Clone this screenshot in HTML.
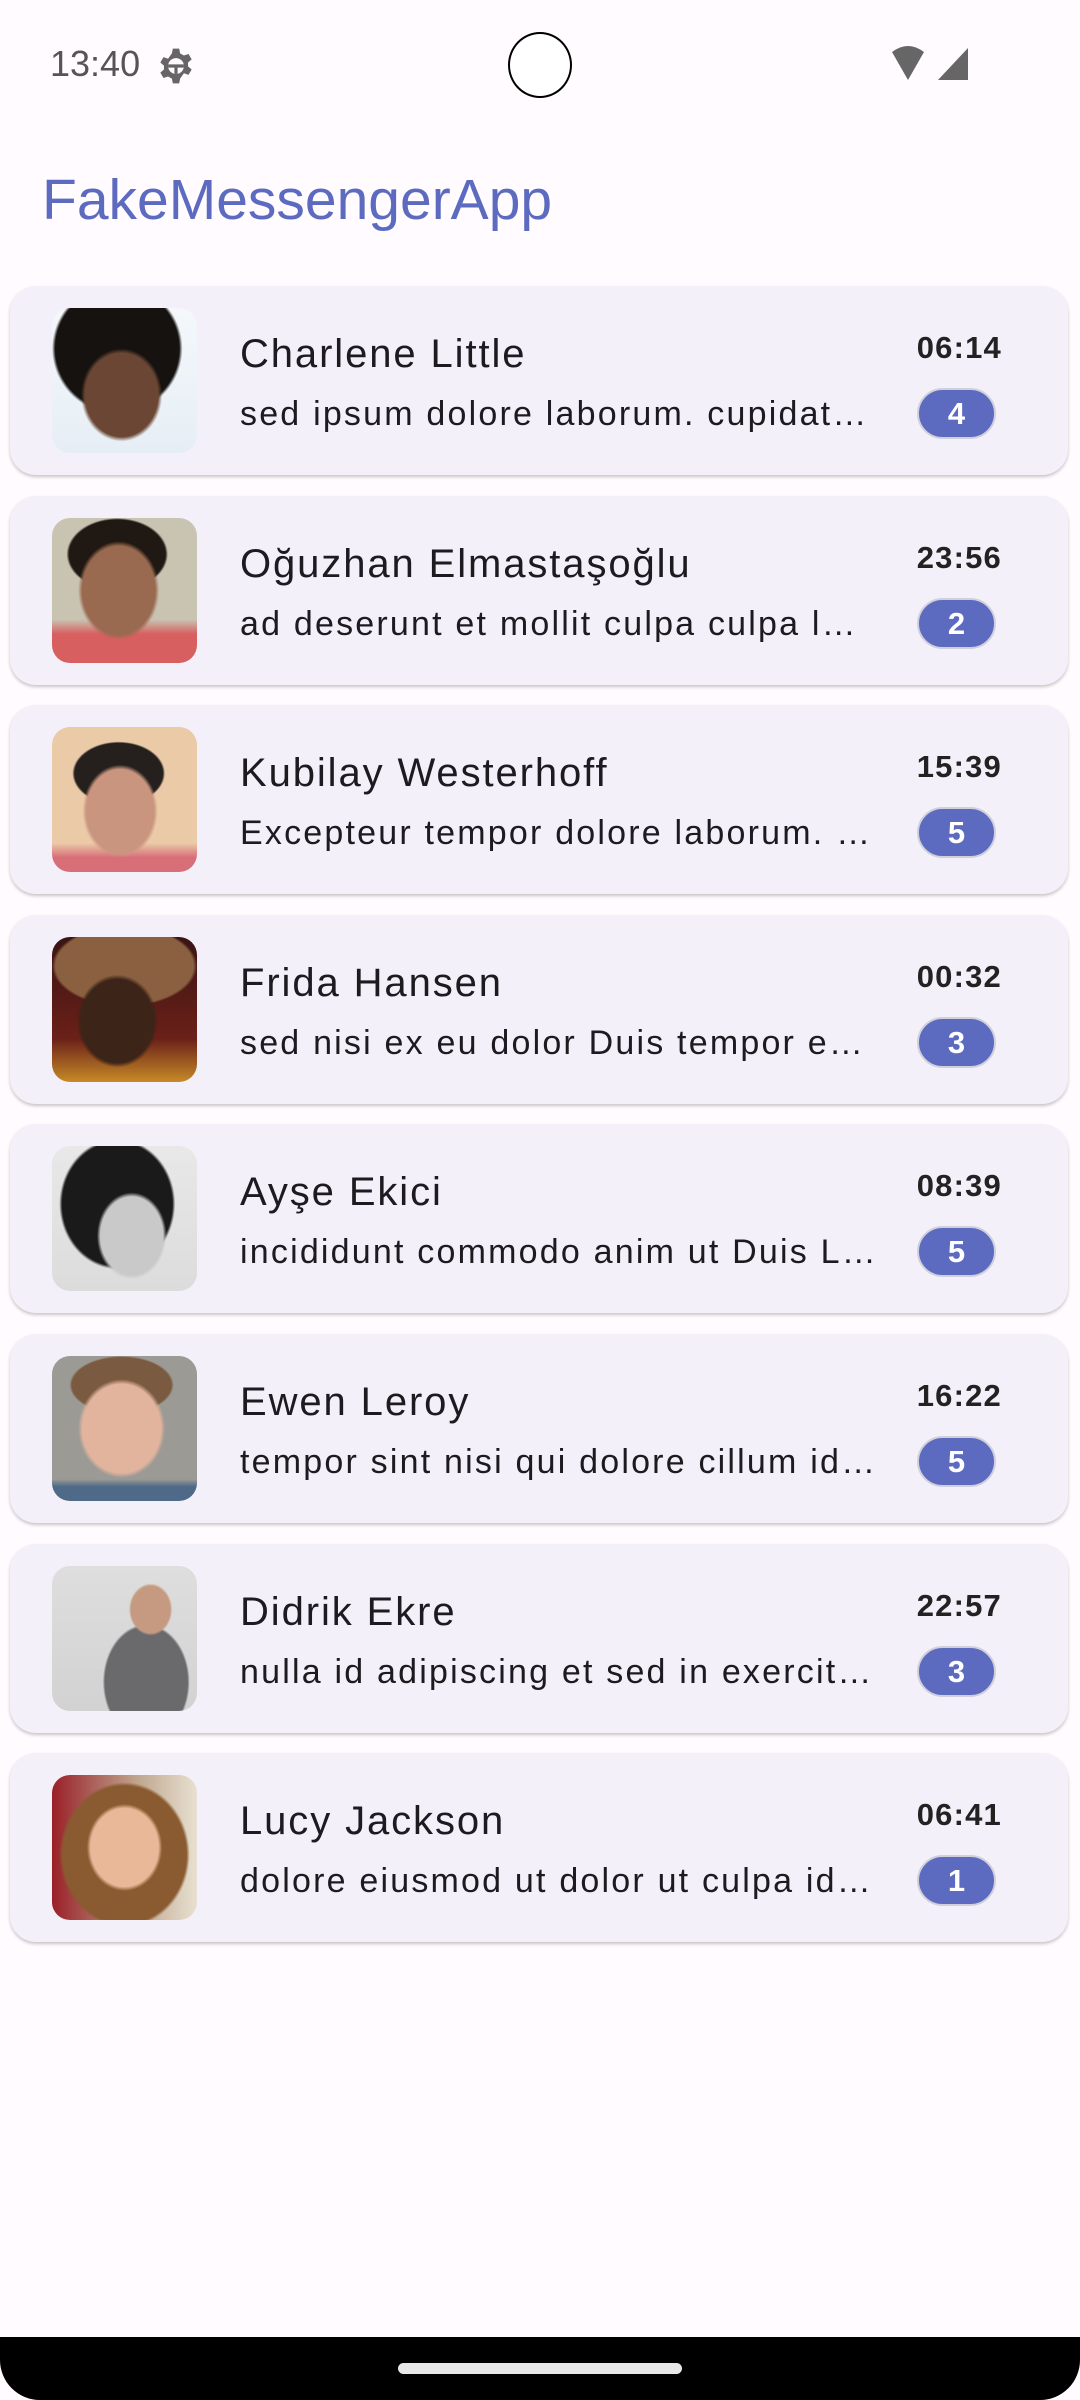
<!DOCTYPE html>
<html><head><meta charset="utf-8"><style>
*{margin:0;padding:0;box-sizing:border-box}
body{width:1080px;height:2400px;background:#fffbfe;position:relative;overflow:hidden;font-family:"Liberation Sans","Noto Sans CJK SC",sans-serif;color:#1c1b1f}
.abs{position:absolute}
.card{position:absolute;left:10px;width:1058px;height:189px;background:#f4f0f9;border-radius:26px;box-shadow:0 2px 3px rgba(0,0,0,.22)}
.av{position:absolute;left:42px;top:22px;width:145px;height:145px;border-radius:18px;overflow:hidden}
.name{position:absolute;left:230px;top:48px;font-size:40px;line-height:40px;letter-spacing:1.9px;white-space:nowrap}
.msg{position:absolute;left:230px;top:110px;width:636px;font-size:34px;line-height:36px;letter-spacing:2.2px;white-space:nowrap;overflow:hidden;text-overflow:ellipsis}
.time{position:absolute;right:66px;top:46px;font-size:31px;line-height:32px;font-weight:bold;letter-spacing:1.2px;color:#222}
.badge{position:absolute;left:907px;top:102px;width:79px;height:51px;border-radius:26px;background:#5c6bc0;border:2px solid #d0d0dc;color:#fff;font-size:31px;line-height:47px;text-align:center;font-weight:bold}
</style></head><body>
<div class="abs" style="left:50px;top:46px;font-size:36px;color:#555;line-height:36px">13:40</div>
<svg class="abs" style="left:157px;top:47px" width="38" height="38" viewBox="0 0 24 24"><path fill="#666" d="M10 1h4l.6 3 2.4 1.4 2.9-1 2 3.4-2.3 2v2.4l2.3 2-2 3.4-2.9-1L14.6 20 14 23h-4l-.6-3L7 18.6l-2.9 1-2-3.4 2.3-2v-2.4l-2.3-2 2-3.4 2.9 1L9.4 4z"/><circle cx="12" cy="12" r="5" fill="#fffbfe"/><path d="M7 12h10M12 12v5" stroke="#666" stroke-width="2"/></svg>
<div class="abs" style="left:508px;top:32px;width:64px;height:66px;border-radius:50%;border:2px solid #000;background:#fff"></div>
<svg class="abs" style="left:890px;top:46px" width="80" height="36" viewBox="0 0 80 36"><path d="M2 6 Q18 -6 34 6 L18 34 Z" fill="#666"/><path d="M78 2 V34 H48 Z" fill="#666"/></svg>
<div class="abs" style="left:42px;top:170px;font-size:57px;line-height:60px;color:#5c6bc0">FakeMessengerApp</div>

<div class="card" style="top:286px"><div class="av" style="background:radial-gradient(ellipse 28% 32% at 48% 60%,#6b4634 0 90%,transparent 100%),radial-gradient(ellipse 45% 45% at 45% 28%,#161210 0 95%,transparent 100%),linear-gradient(#f4f8fb,#e6eef5)"></div><div class="name">Charlene Little</div><div class="msg">sed ipsum dolore laborum. cupidatat non proident</div><div class="time">06:14</div><div class="badge">4</div></div>
<div class="card" style="top:496px"><div class="av" style="background:radial-gradient(ellipse 28% 34% at 46% 50%,#9a6a50 0 90%,transparent 100%),radial-gradient(ellipse 35% 25% at 45% 25%,#201812 0 95%,transparent 100%),linear-gradient(to bottom,#c9c3b1 70%,#d75f60 80%)"></div><div class="name">Oğuzhan Elmastaşoğlu</div><div class="msg">ad deserunt et mollit culpa culpa labore et dolor</div><div class="time">23:56</div><div class="badge">2</div></div>
<div class="card" style="top:705px"><div class="av" style="background:radial-gradient(ellipse 26% 32% at 47% 58%,#c9957e 0 90%,transparent 100%),radial-gradient(ellipse 32% 22% at 46% 32%,#25201e 0 95%,transparent 100%),linear-gradient(to bottom,#ebcaa8 80%,#d86e78 90%)"></div><div class="name">Kubilay Westerhoff</div><div class="msg">Excepteur tempor dolore laborum. in culpa sunt</div><div class="time">15:39</div><div class="badge">5</div></div>
<div class="card" style="top:915px"><div class="av" style="background:radial-gradient(ellipse 28% 32% at 45% 58%,#3c2418 0 90%,transparent 100%),radial-gradient(ellipse 50% 28% at 50% 20%,#8a6040 0 95%,transparent 100%),linear-gradient(to bottom,#3a1414,#6a2018 70%,#c78a28)"></div><div class="name">Frida Hansen</div><div class="msg">sed nisi ex eu dolor Duis tempor esse et ipsum</div><div class="time">00:32</div><div class="badge">3</div></div>
<div class="card" style="top:1124px"><div class="av" style="background:radial-gradient(ellipse 24% 30% at 55% 62%,#c9c9c9 0 90%,transparent 100%),radial-gradient(ellipse 40% 45% at 45% 40%,#1a1a1a 0 95%,transparent 100%),linear-gradient(#e8e8e8,#dcdcdc)"></div><div class="name">Ayşe Ekici</div><div class="msg">incididunt commodo anim ut Duis Lorem ipsum</div><div class="time">08:39</div><div class="badge">5</div></div>
<div class="card" style="top:1334px"><div class="av" style="background:radial-gradient(ellipse 30% 34% at 48% 50%,#e2b49e 0 90%,transparent 100%),radial-gradient(ellipse 36% 20% at 48% 20%,#7a5a40 0 95%,transparent 100%),linear-gradient(to bottom,#9c9a94 85%,#4e6a88 90%)"></div><div class="name">Ewen Leroy</div><div class="msg">tempor sint nisi qui dolore cillum id sunt esse</div><div class="time">16:22</div><div class="badge">5</div></div>
<div class="card" style="top:1544px"><div class="av" style="background:radial-gradient(ellipse 15% 18% at 68% 30%,#c59a80 0 90%,transparent 100%),radial-gradient(ellipse 30% 40% at 65% 80%,#6a6a6c 0 95%,transparent 100%),linear-gradient(#dedede,#d2d2d2)"></div><div class="name">Didrik Ekre</div><div class="msg">nulla id adipiscing et sed in exercitation amet</div><div class="time">22:57</div><div class="badge">3</div></div>
<div class="card" style="top:1753px"><div class="av" style="background:radial-gradient(ellipse 26% 30% at 50% 50%,#e8b898 0 90%,transparent 100%),radial-gradient(ellipse 45% 50% at 50% 55%,#8a5a30 0 95%,transparent 100%),linear-gradient(to right,#9a2028,#c0a890 60%,#e8e0d0)"></div><div class="name">Lucy Jackson</div><div class="msg">dolore eiusmod ut dolor ut culpa id dolor sit</div><div class="time">06:41</div><div class="badge">1</div></div>

<div class="abs" style="left:0;top:2337px;width:1080px;height:63px;background:#000;border-radius:0 0 40px 40px"></div>
<div class="abs" style="left:398px;top:2363px;width:284px;height:11px;border-radius:6px;background:#e8e8e8"></div>
</body></html>
